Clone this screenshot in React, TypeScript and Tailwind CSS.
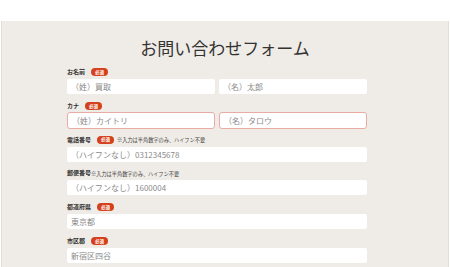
import React from "react";

const JP = { fontFamily: '"Noto Sans CJK JP", "Noto Sans", sans-serif' };

function Badge() {
  return (
    <span className="ml-[6px] inline-flex h-[8px] w-[17px] items-center justify-center rounded-full bg-[#d5401c] text-[4.5px] font-bold leading-none text-white">
      必須
    </span>
  );
}

function Note() {
  return <span className="ml-[3px] text-[5.2px] leading-none text-[#444]">※入力は半角数字のみ、ハイフン不要</span>;
}

function Label({ text, required = true, note = false }: { text: string; required?: boolean; note?: boolean }) {
  return (
    <div className="flex h-[8px] items-center">
      <span className="text-[6px] font-bold leading-none text-[#333]">{text}</span>
      {required && <Badge />}
      {note && (required ? <Note /> : <span className="text-[5.2px] leading-none text-[#444]">※入力は半角数字のみ、ハイフン不要</span>)}
    </div>
  );
}

function Field({ placeholder, error = false }: { placeholder: string; error?: boolean }) {
  return (
    <input
      readOnly
      placeholder={placeholder}
      className={
        "block w-full rounded-[2px] bg-white pl-[4px] text-[8px] outline-none placeholder:text-[#8a8a8a] " +
        (error ? "h-[17px] rounded-[3px] border-[1.5px] border-[#e9aca4] pl-[3px]" : "h-[15px]")
      }
      style={JP}
    />
  );
}

export default function App() {
  return (
    <div className="h-[267px] w-[450px] overflow-hidden bg-white pt-[21px]" style={JP}>
      <div className="mx-[1px] h-[246px] border-x border-[#e2ded8] bg-[#efebe6] pt-[15px]">
        <h1 className="text-center text-[17px] font-normal leading-[24px] text-[#333]">お問い合わせフォーム</h1>
        <div className="ml-[65px] mt-[8px] w-[300px]">
          <div className="mb-[7.8px]">
            <Label text="お名前" />
            <div className="mt-[3px] flex gap-[4px]">
              <Field placeholder="（姓）買取" />
              <Field placeholder="（名）太郎" />
            </div>
          </div>
          <div className="mb-[6.8px]">
            <Label text="カナ" />
            <div className="mt-[2px] flex gap-[4px]">
              <Field placeholder="（姓）カイトリ" error />
              <Field placeholder="（名）タロウ" error />
            </div>
          </div>
          <div className="mb-[7.8px]">
            <Label text="電話番号" note />
            <div className="mt-[3px]">
              <Field placeholder="（ハイフンなし）0312345678" />
            </div>
          </div>
          <div className="mb-[7.8px]">
            <Label text="郵便番号" required={false} note />
            <div className="mt-[3px]">
              <Field placeholder="（ハイフンなし）1600004" />
            </div>
          </div>
          <div className="mb-[7.8px]">
            <Label text="都道府県" />
            <div className="mt-[3px]">
              <Field placeholder="東京都" />
            </div>
          </div>
          <div className="mb-[7.8px]">
            <Label text="市区郡" />
            <div className="mt-[3px]">
              <Field placeholder="新宿区四谷" />
            </div>
          </div>
        </div>
      </div>
    </div>
  );
}
